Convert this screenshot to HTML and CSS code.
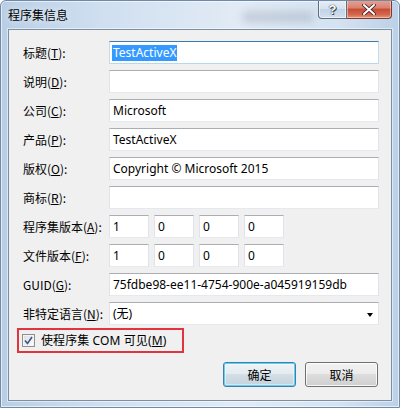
FILE: index.html
```html
<!DOCTYPE html>
<html lang="zh-CN">
<head>
<meta charset="utf-8">
<title>程序集信息</title>
<link rel="stylesheet" href="styles.css">
</head>
<body>
<div class="window">
  <div class="titlebar">
    <span class="title">程序集信息</span>
    <span class="blur-spot"></span>
    <div class="caption-btns">
      <div class="cbtn help">?</div>
      <div class="cbtn close">
        <svg width="14" height="11" viewBox="0 0 14 11"><path d="M2 1 L12 10 M12 1 L2 10" stroke="#3a1d1d" stroke-width="3.6" stroke-linecap="round"/><path d="M2 1 L12 10 M12 1 L2 10" stroke="#ffffff" stroke-width="2" stroke-linecap="round"/></svg>
      </div>
    </div>
  </div>
  <div class="client">
    <div class="form">
      <label class="lbl">标题(<u>T</u>):</label>
      <div class="field focus"><span class="sel">TestActiveX</span></div>

      <label class="lbl">说明(<u>D</u>):</label>
      <div class="field"></div>

      <label class="lbl">公司(<u>C</u>):</label>
      <div class="field">Microsoft</div>

      <label class="lbl">产品(<u>P</u>):</label>
      <div class="field">TestActiveX</div>

      <label class="lbl">版权(<u>O</u>):</label>
      <div class="field">Copyright © Microsoft 2015</div>

      <label class="lbl">商标(<u>R</u>):</label>
      <div class="field"></div>

      <label class="lbl">程序集版本(<u>A</u>):</label>
      <div class="versions">
        <div class="field small">1</div>
        <div class="field small">0</div>
        <div class="field small">0</div>
        <div class="field small">0</div>
      </div>

      <label class="lbl">文件版本(<u>F</u>):</label>
      <div class="versions">
        <div class="field small">1</div>
        <div class="field small">0</div>
        <div class="field small">0</div>
        <div class="field small">0</div>
      </div>

      <label class="lbl">GUID(<u>G</u>):</label>
      <div class="field">75fdbe98-ee11-4754-900e-a045919159db</div>

      <label class="lbl">非特定语言(<u>N</u>):</label>
      <div class="field combo"><span>(无)</span><span class="arrow"></span></div>
    </div>

    <div class="com-row">
      <span class="checkbox">
        <svg width="9" height="9" viewBox="0 0 9 9"><path d="M1 4.5 L3.5 7.5 L8 1" fill="none" stroke="#3d5394" stroke-width="1.6"/></svg>
      </span>
      <span class="com-text">使程序集 COM 可见(<u>M</u>)</span>
    </div>

    <div class="buttons">
      <div class="btn default">确定</div>
      <div class="btn">取消</div>
    </div>
  </div>
</div>
</body>
</html>
```

FILE: styles.css
```css
html, body {
  margin: 0;
  padding: 0;
  background: #ffffff;
}

body {
  font-family: "Noto Sans", "Noto Sans CJK SC", sans-serif;
  font-size: 12px;
  color: #000;
}

.window {
  width: 400px;
  height: 408px;
  box-sizing: border-box;
  padding: 0 7px 6px 7px;
  display: flex;
  flex-direction: column;
  background: linear-gradient(90deg, #b9cee5 0%, #cfdff0 25%, #e2ebf5 60%, #d4e2f1 85%, #bbd0e7 100%);
  border: 1px solid #6f8aa8;
  border-radius: 6px 6px 0 0;
  box-shadow: inset 0 0 0 1px rgba(255,255,255,0.6);
  position: relative;
  overflow: hidden;
}

.titlebar {
  height: 28px;
  display: flex;
  align-items: flex-start;
  position: relative;
  flex: none;
}

.title {
  font-family: "Noto Sans CJK SC", sans-serif;
  font-size: 12px;
  line-height: 14px;
  margin-top: 7px;
  color: #000;
  text-shadow: 0 0 6px rgba(255,255,255,0.9);
}

.blur-spot {
  position: absolute;
  left: 235px;
  top: 11px;
  width: 70px;
  height: 10px;
  background: rgba(120,130,150,0.3);
  filter: blur(4px);
}

.caption-btns {
  margin-left: auto;
  display: flex;
  margin-top: -1px;
}

.cbtn {
  height: 19px;
  box-sizing: border-box;
  border: 1px solid #5e6f85;
  border-top: none;
  display: flex;
  align-items: center;
  justify-content: center;
}

.help {
  width: 29px;
  border-radius: 0 0 0 4px;
  background: linear-gradient(#e9eff7 0%, #d5e1ee 50%, #c2d3e6 51%, #d2e0ef 100%);
  font-family: "Liberation Sans", sans-serif;
  font-weight: bold;
  font-size: 13px;
  color: #fff;
  text-shadow: 0 0 1px #3c4653, 0 0 1px #3c4653, 1px 1px 0 #3c4653;
  box-shadow: inset 0 0 0 1px rgba(255,255,255,0.6);
}

.close {
  width: 45px;
  border-left: none;
  border-radius: 0 0 4px 0;
  background: linear-gradient(#e8a493 0%, #d9806f 45%, #c74b35 50%, #d3654c 80%, #e39a78 100%);
  box-shadow: inset 0 0 0 1px rgba(255,220,210,0.55);
  border-color: #7a3a33;
}

.client {
  flex: 1;
  background: #f0f0f0;
  border: 1px solid #7d8fa3;
  box-shadow: 0 0 0 1px rgba(255,255,255,0.5);
  padding: 11px 12px 0 14px;
  display: flex;
  flex-direction: column;
  box-sizing: border-box;
}

.form {
  display: grid;
  grid-template-columns: 86px 1fr;
  grid-auto-rows: 23px;
  row-gap: 6px;
  align-items: center;
}

.lbl {
  font-family: "Noto Sans CJK SC", sans-serif;
  font-size: 12px;
  line-height: 14px;
  white-space: nowrap;
}

.lbl u, .com-text u {
  text-underline-offset: 1px;
}

.field {
  height: 23px;
  box-sizing: border-box;
  background: #fff;
  border: 1px solid #e2e3ea;
  border-top-color: #abadb3;
  border-bottom-color: #e3e9ef;
  display: flex;
  align-items: center;
  padding-left: 3px;
  font-size: 12px;
  line-height: 16px;
  white-space: nowrap;
  overflow: hidden;
}

.field.focus {
  border-color: #c5daed;
  border-top-color: #3d7bad;
  border-bottom-color: #b7d9ed;
}

.sel {
  background: #3399ff;
  color: #fff;
  padding: 0 1px;
  margin-left: -1px;
}

.versions {
  display: flex;
  gap: 5px;
}

.field.small {
  width: 40px;
}

.combo {
  justify-content: space-between;
  padding-right: 5px;
}

.arrow {
  width: 0;
  height: 0;
  border-left: 3.5px solid transparent;
  border-right: 3.5px solid transparent;
  border-top: 4px solid #000;
  margin-top: 2px;
}

.com-row {
  margin-top: 3px;
  margin-left: -6px;
  align-self: flex-start;
  width: 167px;
  height: 25px;
  box-sizing: border-box;
  border: 2px solid #e0353f;
  display: flex;
  align-items: center;
  padding-left: 3px;
  gap: 6px;
}

.checkbox {
  width: 13px;
  height: 13px;
  box-sizing: border-box;
  border: 1px solid #8e8f8f;
  background: linear-gradient(135deg, #dcdcdc, #ffffff);
  box-shadow: inset 0 0 0 1px #f4f4f4;
  display: flex;
  align-items: center;
  justify-content: center;
}

.com-text {
  font-size: 12px;
  line-height: 14px;
  white-space: nowrap;
  letter-spacing: 0.1px;
}

.buttons {
  margin-top: 9px;
  display: flex;
  justify-content: flex-end;
  gap: 9px;
  padding-right: 1px;
}

.btn {
  width: 73px;
  height: 25px;
  box-sizing: border-box;
  border: 1px solid #707070;
  border-radius: 3px;
  background: linear-gradient(#f2f2f2 0%, #ebebeb 49%, #dddddd 50%, #cfcfcf 100%);
  box-shadow: inset 0 0 0 1px rgba(255,255,255,0.8);
  display: flex;
  align-items: center;
  justify-content: center;
  font-family: "Noto Sans CJK SC", sans-serif;
  font-size: 12px;
  line-height: 14px;
}

.btn.default {
  border-color: #3c7fb1;
  box-shadow: inset 0 0 0 1px #5fd0f2, inset 0 0 0 2px rgba(255,255,255,0.4);
  background: linear-gradient(#eef3f6 0%, #e3ebf0 49%, #d3dee5 50%, #c6d3dc 100%);
}
```
